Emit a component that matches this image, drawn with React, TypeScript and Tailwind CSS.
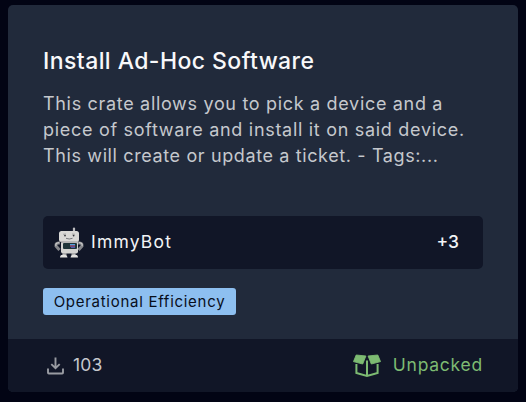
function Robot() {
  return (
    <svg width="30" height="32" viewBox="0 0 30 32" className="block shrink-0">
      <path d="M20 1.5v5" stroke="#bcbcbe" strokeWidth="2.2" strokeLinecap="round" />
      <path d="M6 16Q1.5 15.5 2 19L5.5 23M24 16q4.5-.5 4 3L24.5 23" fill="none" stroke="#85868a" strokeWidth="3" />
      <path d="M5 15.7Q1 16 2 19M25 15.7q4 .3 3 3.3" fill="none" stroke="#c9c9c9" strokeWidth="1.2" />
      <rect x="7" y="14" width="17" height="12.5" rx="2" fill="#d4d3d1" />
      <rect x="5" y="4" width="20" height="11" rx="2.5" fill="#d9d8d6" />
      <path d="M7 15h16" stroke="#88888b" strokeWidth=".8" />
      <path d="M9 7.3l3-.3M18 7l3 .3" stroke="#929292" strokeWidth=".7" />
      <circle cx="11" cy="8.6" r=".9" fill="#34353a" />
      <circle cx="19.6" cy="8.6" r=".9" fill="#34353a" />
      <path d="M12 11.3q3.3 1.4 6.5 0" fill="none" stroke="#6a6b70" strokeWidth=".9" />
      <rect x="9" y="16" width="14" height="6" rx="1" fill="#20353a" />
      <path d="M16 17.6h5" stroke="#4fa2dc" strokeWidth="1.2" />
      <path d="M16 19h5" stroke="#d6578c" strokeWidth="1.2" />
      <path d="M17 20.3h4" stroke="#5665c8" />
      <path d="M10.5 26v3M19.5 26v3" stroke="#a9a9aa" strokeWidth="4" />
      <path d="M6 30.5q0-3 3.5-3t4 3zM16.5 30.5q.5-3 4-3t3.5 3z" fill="#e3e2e0" />
    </svg>
  );
}

function DownloadIcon() {
  return (
    <svg width="17" height="18" viewBox="0 0 17 18" fill="none" stroke="#999ba2" strokeWidth="1.9" className="block">
      <path d="M8.5 .5v10.5M4.3 7.1l4.2 4.1 4.2-4.1M1 11.5v4.2q0 .8.8.8h13.4q.8 0 .8-.8v-4.2" />
    </svg>
  );
}

function OpenBox() {
  return (
    <svg width="28" height="24" viewBox="0 0 28 24" className="block shrink-0">
      <path d="M3.2 1l9.7 1-3.2 8L.5 7.6zM15.1 2l9.7-1 2.7 6.6-9.2 2.4z" fill="#7dbb72" stroke="#7dbb72" strokeWidth=".9" strokeLinejoin="round" />
      <path d="M3.4 10v9L14 22l10.6-3v-9M14 6.5V22" fill="none" stroke="#7dbb72" strokeWidth="2" />
    </svg>
  );
}

export default function App() {
  return (
    <main className="h-[402px] w-[526px] bg-[#020414] px-2 pt-[5px] font-['Inter','Liberation_Sans',sans-serif]">
      <article className="flex h-[387px] w-[510px] flex-col overflow-hidden rounded-[5px] bg-[#212a3b]">
        <div className="flex h-[334px] flex-col items-start px-[35px] pt-[41px]">
          <h1 className="h-[30px] whitespace-nowrap text-[23px] font-medium leading-[30px] tracking-[0.43px] text-[#f8f8fa]">Install Ad-Hoc Software</h1>
          <p className="mt-[15px] whitespace-nowrap text-[18px] leading-[26px] text-[#c5c8cd]">
            <span className="block tracking-[0.68px]">This crate allows you to pick a device and a</span>
            <span className="block tracking-[0.7px]">piece of software and install it on said device.</span>
            <span className="block tracking-[0.62px]">This will create or update a ticket. - Tags:...</span>
          </p>
          <div className="mt-[47px] flex h-[53px] w-[440px] items-center rounded-[5px] bg-[#111627] pl-[11px] pr-6 text-[17.5px] text-[#f3f4f6]">
            <Robot />
            <span className="ml-[7px] tracking-[1.2px]">ImmyBot</span>
            <span className="ml-auto font-medium">+3</span>
          </div>
          <div className="mt-[19px] flex h-[27px] w-[193px] items-center justify-center whitespace-nowrap rounded-[3px] bg-[#8dbff0] pt-px text-[15px] tracking-[0.72px] text-[#080e1b]">Operational Efficiency</div>
        </div>
        <footer className="flex h-[53px] items-center bg-[#111627] pl-[39px] pr-[35px] text-[17.5px]">
          <DownloadIcon />
          <span className="ml-[9px] tracking-[0.2px] text-[#c5c8cd]">103</span>
          <div className="ml-auto flex items-center text-[#7dbb72]">
            <OpenBox />
            <span className="ml-3 tracking-[0.75px]">Unpacked</span>
          </div>
        </footer>
      </article>
    </main>
  );
}
